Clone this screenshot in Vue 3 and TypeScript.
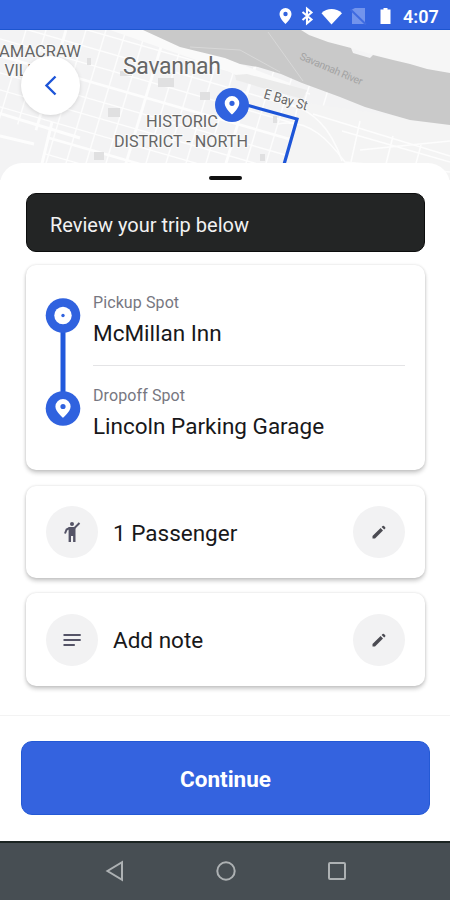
<script setup lang="ts">
interface Street {
  x1: number
  y1: number
  x2: number
  y2: number
  w: number
}

interface Block {
  x: number
  y: number
  w: number
  h: number
}

const streets: Street[] = []
for (let i = 0; i < 15; i++) {
  const y = -62 + i * 17
  streets.push({ x1: -10, y1: y, x2: 310, y2: y + 92, w: i % 4 === 1 ? 2.6 : 1.4 })
}
for (let i = 0; i < 17; i++) {
  const x = 8 + i * 20
  streets.push({ x1: x + 18, y1: 0, x2: x - 27, y2: 150, w: i % 5 === 2 ? 2.8 : 1.4 })
}

const blocks: Block[] = [
  { x: 108, y: 78, w: 12, h: 9 },
  { x: 158, y: 48, w: 16, h: 9 },
  { x: 200, y: 62, w: 10, h: 8 },
  { x: 94, y: 122, w: 10, h: 8 },
  { x: 87, y: 28, w: 4, h: 7 },
  { x: 120, y: 41, w: 12, h: 5 },
  { x: 273, y: 86, w: 4, h: 7 },
  { x: 260, y: 124, w: 5, h: 7 },
]

const riverRoads: string[] = [
  'M290 74 C311 81 330 95 342 131',
  'M278 94 C310 88 330 112 345 132 L450 142',
  'M297 79 L285 132',
  'M360 91 L351 132',
  'M313 84 L450 126',
  'M342 101 L450 132',
  'M393 106 L386 134',
  'M421 115 L415 137',
  'M360 120 L450 111',
]
</script>

<template>
  <main class="screen">
    <header class="status">
      <svg class="status-icons" viewBox="0 0 124 24" aria-hidden="true">
        <path fill="#fff" fill-rule="evenodd" d="M10.500 4a6 6 0 0 0-6 6c0 4.500 6 10 6 10s6-5.500 6-10a6 6 0 0 0-6-6Zm0 3.800a2.200 2.200 0 1 1 0 4.400 2.200 2.200 0 0 1 0-4.400Z" />
        <path class="bt" d="m27.500 8 9 7.500-4.500 3.800V4.700l4.500 3.800-9 7.500" />
        <path fill="#fff" d="M46.500 9.200C52 3.600 61 3.600 67 9.200L56.500 20.500Z" />
        <path fill="#7294ec" d="M77 5.500 80 4h10v16H77Z" />
        <path class="slash" d="m75.500 5.500 15.500 15" />
        <path fill="#fff" d="M105.500 5.500h3V4h4v1.500h3V20h-10Z" />
      </svg>
      <span class="clock">4:07</span>
    </header>

    <section class="map">
      <svg class="map-art" viewBox="0 0 450 150" aria-hidden="true">
        <rect width="450" height="150" fill="#f3f3f4" />
        <g stroke="#fdfdfd">
          <line v-for="(s, i) in streets" :key="i" :x1="s.x1" :y1="s.y1" :x2="s.x2" :y2="s.y2" :stroke-width="s.w" />
        </g>
        <path fill="#f4f4f4" d="M300 72 L450 94V150H282Z" />
        <path fill="#f3f3f4" d="M-2 88 48 104 38 150H-2Z" />
        <g fill="none" stroke="#fdfdfd" stroke-width="1.500">
          <path v-for="(d, i) in riverRoads" :key="i" :d="d" />
          <path stroke-width="3" d="M-5 82 80 108M52 92 38 150M0 106 34 114" />
        </g>
        <g fill="#e0e0e1">
          <rect v-for="(b, i) in blocks" :key="i" :x="b.x" :y="b.y" :width="b.w" :height="b.h" />
        </g>
        <path fill="#f6f6f6" d="M300 0H450V45L300 5Z" />
        <path fill="#fafafa" d="M145 0 172 11 225 28 290 53 285 66 225 40 150 14 110 0Z" />
        <path fill="#ebebeb" d="m235 45 12-1 60 16-4 9-27-7-40-12Z" />
        <path fill="#c9c9c9" d="M143 0H301L309 5 328 12 351 18 353 23 370 28 373 25 393 30 410 34 427 39 450 43V95L410 90 382 82 365 77 340 67 302 53 281 44 258 37 240 34 225 28 180 17Z" />
        <path fill="none" stroke="#d8d8d8" d="m190 17 50 3 40 22M268 2l35 49" />
        <path class="route" d="M232 71 297 89 283 138" />
        <g class="label">
          <text x="-1" y="27" font-size="17" textLength="82" lengthAdjust="spacingAndGlyphs">AMACRAW</text>
          <text x="4.500" y="46" font-size="17" textLength="61" lengthAdjust="spacingAndGlyphs">VILLAGE</text>
          <text x="123" y="43.500" font-size="23" textLength="98">Savannah</text>
          <text x="146" y="97" font-size="16.500" textLength="72" lengthAdjust="spacingAndGlyphs">HISTORIC</text>
          <text x="114" y="117" font-size="16.500" textLength="134" lengthAdjust="spacingAndGlyphs">DISTRICT - NORTH</text>
          <text transform="translate(263 68) rotate(16)" font-size="13.500" textLength="45" lengthAdjust="spacingAndGlyphs">E Bay St</text>
          <text class="river" transform="translate(299 29) rotate(23)" font-size="10.500" textLength="67">Savannah River</text>
        </g>
        <circle cx="232" cy="75" r="17" fill="#3062df" />
        <path fill="#fff" fill-rule="evenodd" d="M232 66a7.300 7.300 0 0 0-7.300 7.300c0 5 7.300 11.200 7.300 11.200s7.300-6.200 7.300-11.200A7.300 7.300 0 0 0 232 66Zm0 4.700a2.600 2.600 0 1 1 0 5.200 2.600 2.600 0 0 1 0-5.200Z" />
      </svg>
      <button class="back" aria-label="Back">
        <svg width="14" height="22" viewBox="0 0 14 22"><path d="m11.500 1.500-9 9 9 9" fill="none" stroke="#1d55d8" stroke-width="2.400" /></svg>
      </button>
    </section>

    <section class="sheet">
      <div class="handle"></div>
      <div class="banner">Review your trip below</div>

      <div class="card trip">
        <svg class="rail" viewBox="0 0 36 130" aria-hidden="true">
          <path d="M18 18V111" stroke="#2159dc" stroke-width="5" />
          <circle cx="18" cy="18.500" r="17.300" fill="#3062df" />
          <circle cx="18" cy="18.500" r="8.700" fill="#fff" />
          <circle cx="18" cy="18.500" r="1.700" fill="#3062df" />
          <circle cx="18" cy="111.500" r="17.300" fill="#3062df" />
          <path fill="#fff" fill-rule="evenodd" d="M18 102a7.600 7.600 0 0 0-7.600 7.600c0 5 7.600 11.400 7.600 11.400s7.600-6.400 7.600-11.400A7.600 7.600 0 0 0 18 102Zm0 4.900a2.600 2.600 0 1 1 0 5.200 2.600 2.600 0 0 1 0-5.200Z" />
        </svg>
        <div class="stops">
          <div class="stop">
            <span class="caption">Pickup Spot</span>
            <span class="place">McMillan Inn</span>
          </div>
          <div class="stop second">
            <span class="caption">Dropoff Spot</span>
            <span class="place">Lincoln Parking Garage</span>
          </div>
        </div>
      </div>

      <div class="card row passengers">
        <span class="disc">
          <svg width="20" height="24" viewBox="0 0 20 24" fill="none" stroke="#555467">
            <circle cx="10" cy="4" r="2" fill="#555467" stroke="none" />
            <path d="M3 13.500 4.600 9.500 7.500 8h5L17.500 3" stroke-width="2" />
            <path d="M6.600 7h6.900v15h-2.400v-6H9v6H6.600Z" fill="#555467" stroke="none" />
          </svg>
        </span>
        <span class="row-text">1 Passenger</span>
        <button class="disc" aria-label="Edit passengers">
          <svg width="16" height="16" viewBox="0 0 16 16" fill="#4b4b52"><path d="M1.500 12 9.600 4l2.400 2.400L4 14.500H1.500ZM10.600 3l1-1q.7-.6 1.400 0l1.200 1.200q.6.700 0 1.400l-1 1Z" /></svg>
        </button>
      </div>

      <div class="card row note">
        <span class="disc">
          <svg width="18" height="14" viewBox="0 0 18 14"><path d="M.5 2h17.200M.5 7h17.200M.5 12h11.300" stroke="#555467" stroke-width="2" /></svg>
        </span>
        <span class="row-text add">Add note</span>
        <button class="disc" aria-label="Edit note">
          <svg width="16" height="16" viewBox="0 0 16 16" fill="#4b4b52"><path d="M1.500 12 9.600 4l2.400 2.400L4 14.500H1.500ZM10.600 3l1-1q.7-.6 1.400 0l1.200 1.200q.6.700 0 1.400l-1 1Z" /></svg>
        </button>
      </div>
    </section>

    <footer class="actions">
      <button class="continue">Continue</button>
    </footer>

    <nav class="system">
      <svg width="20" height="22" viewBox="0 0 20 22"><path d="M17 2.200V19.800L2.500 11Z" /></svg>
      <svg width="22" height="22" viewBox="0 0 22 22"><circle cx="11" cy="11" r="8.700" /></svg>
      <svg width="20" height="22" viewBox="0 0 20 22"><rect x="2" y="3" width="16" height="16" rx="1" /></svg>
    </nav>
  </main>
</template>

<style>
body {
  background: #fff;
}
</style>

<style scoped>
.screen {
  width: 450px;
  height: 900px;
  display: flex;
  flex-direction: column;
  overflow: hidden;
  background: #fff;
  font-family: Roboto, "Liberation Sans", sans-serif;
  color: #18181a;
}
button {
  border: 0;
  padding: 0;
  font-family: inherit;
}
svg {
  display: block;
  flex: none;
}
.status {
  flex: none;
  box-sizing: border-box;
  height: 30px;
  padding: 3px 12px 0 275px;
  display: flex;
  align-items: center;
  background: #3263df;
  border-bottom: 1px solid #1d55cf;
}
.status-icons {
  width: 124px;
  height: 24px;
}
.bt {
  fill: none;
  stroke: #fff;
  stroke-width: 2.1;
}
.slash {
  fill: none;
  stroke: #3f6be0;
  stroke-width: 2;
}
.clock {
  margin-left: 4px;
  color: #fff;
  font-size: 18px;
  font-weight: 600;
  white-space: nowrap;
}
.map {
  position: relative;
  flex: none;
  height: 133px;
}
.map-art {
  width: 450px;
  height: 150px;
}
.label {
  fill: #666;
  stroke: #fafafa;
  stroke-width: 2px;
  paint-order: stroke;
}
.river {
  fill: #a3a3a3;
  stroke: none;
}
.route {
  fill: none;
  stroke: #1d55d8;
  stroke-width: 3.2;
}
.back {
  position: absolute;
  left: 21px;
  top: 26px;
  width: 59px;
  height: 59px;
  border-radius: 50%;
  display: grid;
  place-items: center;
  background: #fff;
  box-shadow: 0 1px 4px #0002;
}
.sheet {
  position: relative;
  flex: none;
  box-sizing: border-box;
  height: 552px;
  padding: 13px 25px 0 26px;
  display: flex;
  flex-direction: column;
  background: #fff;
  border-radius: 22px 22px 0 0;
}
.handle {
  flex: none;
  align-self: center;
  width: 33px;
  height: 4px;
  border-radius: 2px;
  background: #101010;
}
.banner {
  flex: none;
  box-sizing: border-box;
  height: 59px;
  margin-top: 13px;
  padding: 4px 0 0 23px;
  display: flex;
  align-items: center;
  border-radius: 10px;
  border: 1px solid #0c0d0d;
  background: #232525;
  color: #f2f2f2;
  font-size: 20px;
}
.card {
  flex: none;
  box-sizing: border-box;
  background: #fff;
  border-radius: 10px;
  box-shadow: 0 3px 4px #0003, 0 0 3px #0002;
}
.trip {
  height: 205px;
  margin-top: 13px;
  padding: 32px 20px 0 19px;
  display: flex;
  gap: 12px;
}
.rail {
  width: 36px;
  height: 130px;
}
.stops {
  flex: 1;
  margin-top: -5px;
}
.stop {
  display: flex;
  flex-direction: column;
  height: 73px;
}
.second {
  border-top: 1px solid #e4e4e6;
  padding-top: 19px;
}
.caption {
  font-size: 16px;
  line-height: 22px;
  letter-spacing: 0.1px;
  color: #777781;
}
.place {
  margin-top: 4px;
  font-size: 22.500px;
  line-height: 30px;
}
.row {
  display: flex;
  align-items: center;
  padding: 0 20px;
}
.passengers {
  height: 92px;
  margin-top: 16px;
}
.note {
  height: 93px;
  margin-top: 15px;
}
.disc {
  flex: none;
  width: 52px;
  height: 52px;
  border-radius: 50%;
  display: grid;
  place-items: center;
  background: #f2f2f3;
}
.row-text {
  flex: 1;
  margin: 2px 0 0 15px;
  font-size: 22.500px;
}
.add {
  margin-top: 0;
}
.actions {
  flex: none;
  box-sizing: border-box;
  height: 126px;
  padding: 25px 20px 0 21px;
  border-top: 1px solid #f3f3f3;
}
.continue {
  width: 409px;
  height: 74px;
  border-radius: 11px;
  border: 1px solid #2459d5;
  background: #3463df;
  color: #fff;
  font-size: 22.500px;
  font-weight: 700;
  padding-top: 1px;
}
.system {
  flex: none;
  box-sizing: border-box;
  height: 59px;
  padding: 0 103px 1px 105px;
  display: flex;
  align-items: center;
  justify-content: space-between;
  background: #474e53;
  border-top: 2px solid #1b2422;
}
.system svg {
  fill: none;
  stroke: #adb1b3;
  stroke-width: 2;
}
</style>
